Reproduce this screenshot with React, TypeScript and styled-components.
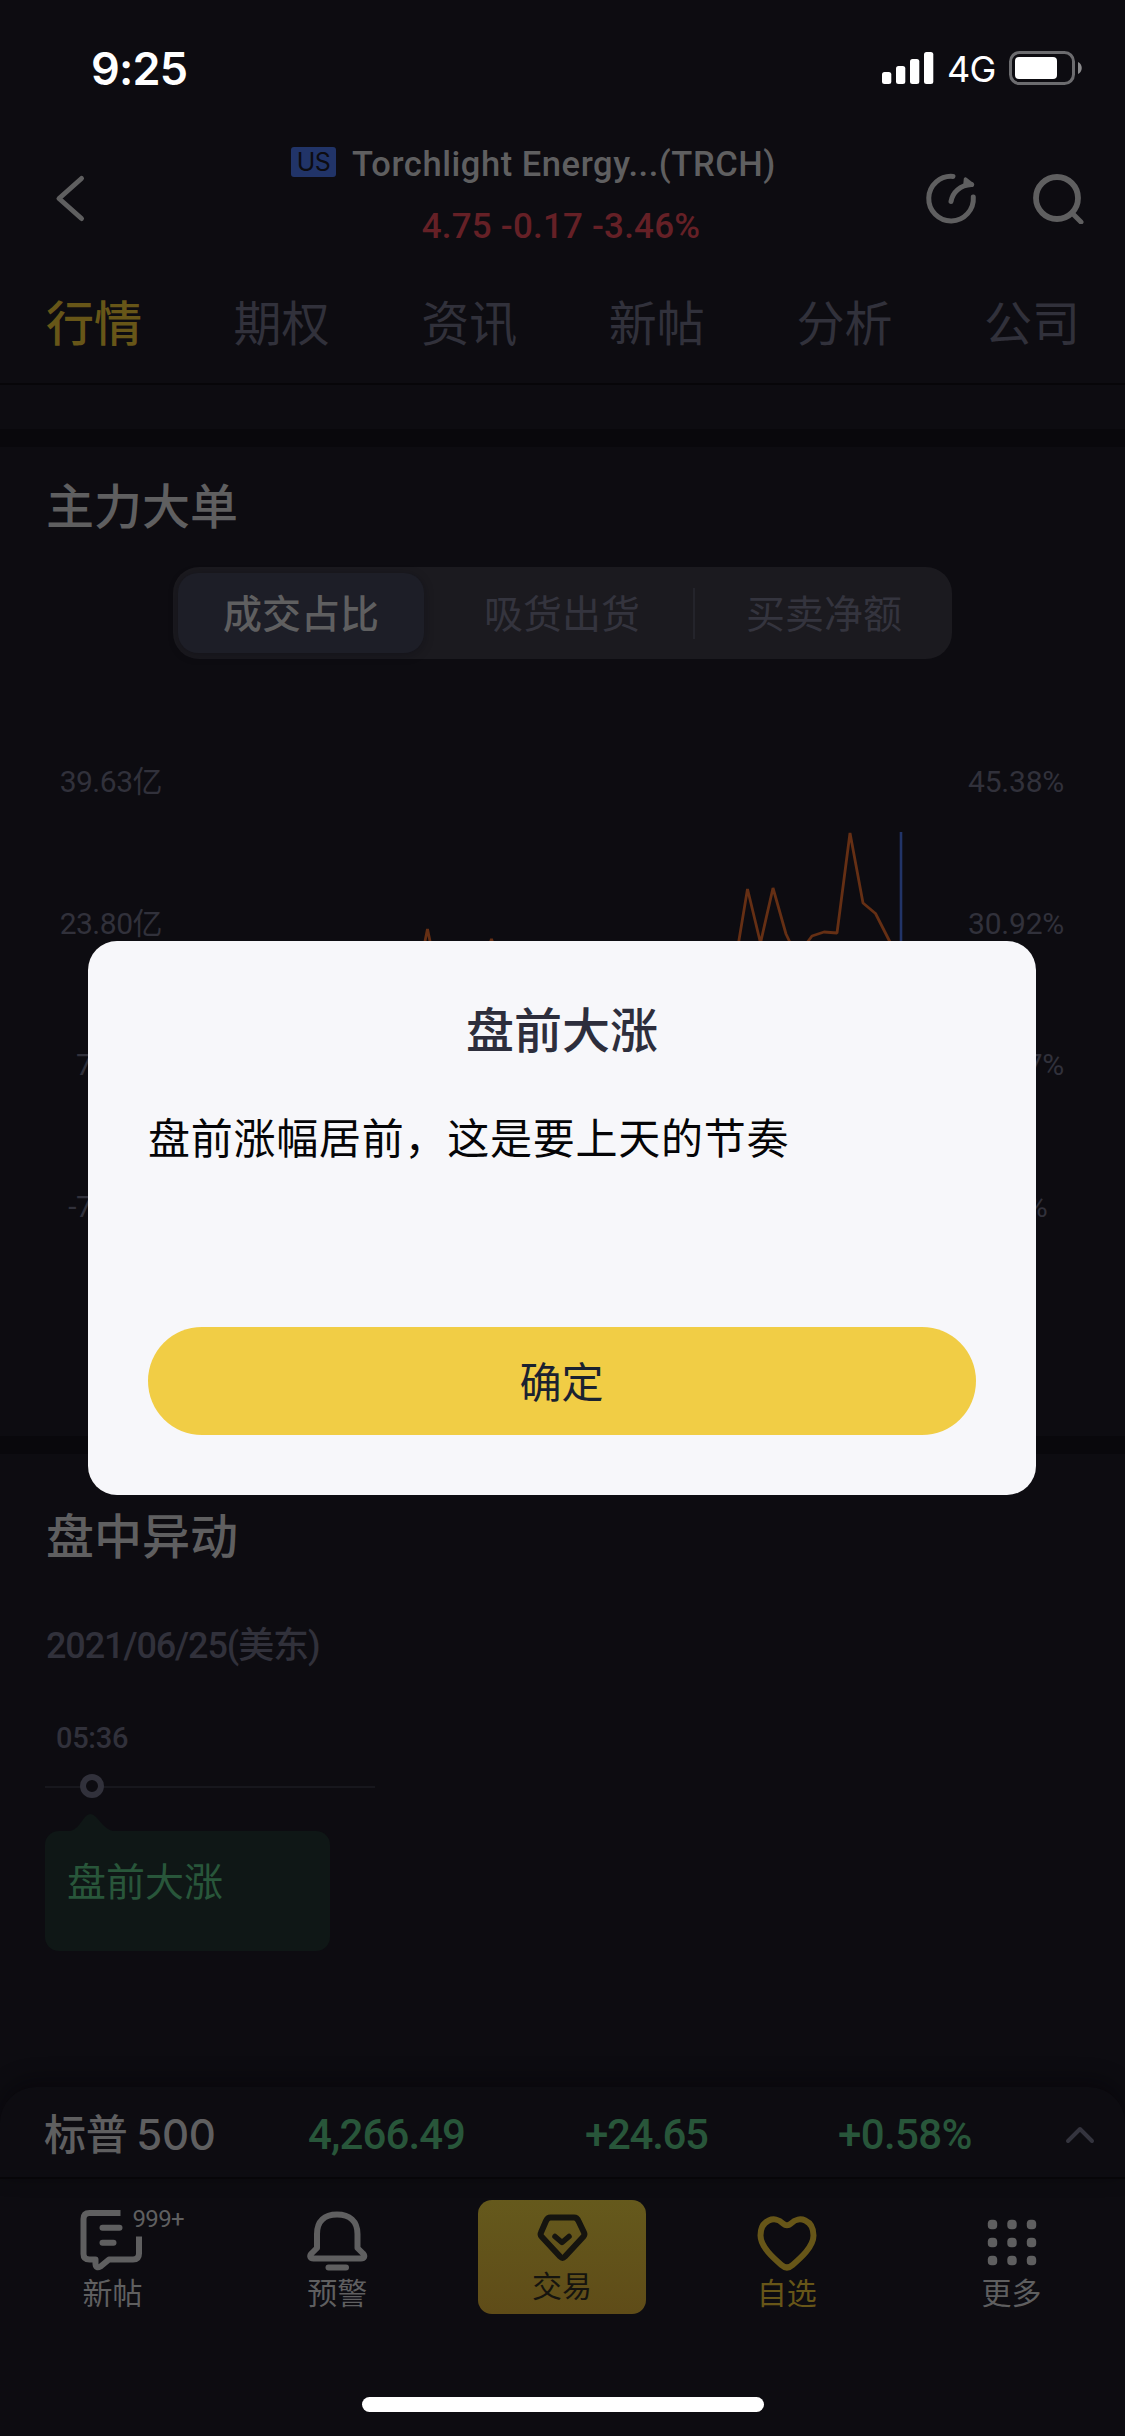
import React from "react";
import styled, { createGlobalStyle } from "styled-components";

const c = {
  page: "#0d0c11",
  band: "#09080c",
  line: "#070609",
  text: "#5f5f60",
  muted: "#31313b",
  faint: "#17171d",
  yellow: "#675618",
  green: "#28563a",
  greenBg: "#0f1716",
  red: "#652026",
  blue: "#213468",
};

const cjk = `"Noto Sans CJK SC", sans-serif`;
const num = `Roboto, "Noto Sans CJK SC", sans-serif`;

const GlobalStyle = createGlobalStyle`
  * { box-sizing: border-box; }
  html, body { margin: 0; padding: 0; background: ${c.page}; }
  body { font-family: ${cjk}; color: ${c.text}; }
`;

const Screen = styled.div`
  position: relative;
  width: 1125px;
  height: 2436px;
  display: flex;
  flex-direction: column;
  overflow: hidden;
  background: ${c.page};
  white-space: nowrap;
`;

const StatusBar = styled.header`
  height: 132px;
  padding: 0 41px 0 91px;
  display: flex;
  justify-content: space-between;
  align-items: flex-start;
  color: #fff;
`;

const Clock = styled.span`
  margin-top: 39px;
  font: 600 45px/60px Inter, sans-serif;
  letter-spacing: -0.8px;
`;

const StatusIcons = styled.div`
  margin-top: 48px;
  height: 40px;
  display: flex;
  align-items: center;
`;

const Network = styled.span`
  width: 75px;
  padding: 2px 0 0 13px;
  font: 400 36px/40px Inter, sans-serif;
  letter-spacing: -0.8px;
`;

const NavBar = styled.nav`
  height: 132px;
  padding: 0 40px 0 51px;
  display: grid;
  grid-template-columns: 170px 1fr 170px;
`;

const NavSide = styled.div<{ $end?: boolean }>`
  padding-top: 38px;
  display: flex;
  align-items: flex-start;
  justify-content: ${(p) => (p.$end ? "flex-end" : "flex-start")};
  gap: 53px;
`;

const NavTitle = styled.div`
  padding-top: 11px;
  display: flex;
  flex-direction: column;
  align-items: center;
`;

const StockName = styled.div`
  display: flex;
  align-items: center;
  gap: 16px;
  height: 42px;
  margin-right: 69px;
  font: 500 34.5px/42px ${num};
  letter-spacing: 0.55px;
`;

const Market = styled.span`
  width: 45px;
  height: 30px;
  border-radius: 3px;
  background: ${c.blue};
  color: ${c.page};
  text-align: center;
  font: 400 25px/30px Inter, sans-serif;
  letter-spacing: -0.5px;
  transform: translateY(-2px);
`;

const Price = styled.div`
  margin: 21px 14px 0 0;
  color: ${c.red};
  font: 500 35px/42px ${num};
  letter-spacing: 0.2px;
`;

const Tabs = styled.div`
  height: 121px;
  padding: 0 45px 8px 46px;
  display: flex;
  justify-content: space-between;
  align-items: center;
  border-bottom: 2px solid ${c.line};
`;

const Tab = styled.span<{ $active?: boolean }>`
  font-size: 48px;
  line-height: 60px;
  font-weight: ${(p) => (p.$active ? 500 : 400)};
  color: ${(p) => (p.$active ? c.yellow : c.muted)};
`;

const Band = styled.div<{ $top: number }>`
  margin-top: ${(p) => p.$top}px;
  height: 18px;
  flex: none;
  background: ${c.band};
`;

const Section = styled.section<{ $height?: number }>`
  height: ${(p) => (p.$height ? `${p.$height}px` : "auto")};
  flex: none;
  display: flex;
  flex-direction: column;
`;

const SectionTitle = styled.h2<{ $top: number }>`
  margin: ${(p) => p.$top}px 0 0 46px;
  font-size: 48px;
  line-height: 60px;
  font-weight: 500;
`;

const Segments = styled.div`
  width: 779px;
  height: 92px;
  margin: 34px 0 0 173px;
  padding: 0 5px;
  display: flex;
  align-items: center;
  border-radius: 26px;
  background: #1b1a1f;
`;

const Segment = styled.span<{ $active?: boolean; $width: number; $indent?: number }>`
  flex: none;
  width: ${(p) => p.$width}px;
  height: 80px;
  padding-left: ${(p) => p.$indent ?? 0}px;
  border-radius: 20px;
  text-align: center;
  font-size: 39px;
  line-height: 76px;
  font-weight: ${(p) => (p.$active ? 500 : 400)};
  color: ${(p) => (p.$active ? c.text : "#34343e")};
  background: ${(p) => (p.$active ? "#1d1e27" : "transparent")};
  box-shadow: ${(p) => (p.$active ? "0 2px 10px rgba(10, 10, 16, 0.35)" : "none")};
`;

const Divider = styled.i`
  flex: none;
  width: 2px;
  height: 51px;
  background: #24242b;
`;

const Chart = styled.div`
  display: flex;
  margin-top: 51px;
`;

const Axis = styled.div<{ $side: "left" | "right" }>`
  width: ${(p) => (p.$side === "left" ? 162 : 157)}px;
  padding-top: 1px;
  text-align: ${(p) => (p.$side === "left" ? "right" : "left")};
  color: ${c.muted};
  font: 400 30px/142px ${num};
  letter-spacing: ${(p) => (p.$side === "left" ? -0.5 : -0.2)}px;
`;

const AxisLabel = styled.div`
  height: 141.7px;
`;

const DateLine = styled.div`
  margin: 58px 0 0 46px;
  color: ${c.muted};
  font: 500 36px/50px ${num};
  letter-spacing: -1.1px;
`;

const Timeline = styled.div`
  width: 330px;
  margin: 46px 0 0 45px;
`;

const Time = styled.div`
  padding-left: 11px;
  color: ${c.muted};
  font: 500 29px/42px ${num};
  letter-spacing: -0.3px;
`;

const Track = styled.div`
  height: 24px;
  margin-top: 15px;
  padding-left: 35px;
  display: flex;
  align-items: center;
  background: linear-gradient(${c.faint}, ${c.faint}) 0 12px / 100% 2px no-repeat;
`;

const Dot = styled.i`
  width: 24px;
  height: 24px;
  border-radius: 50%;
  border: 6px solid ${c.muted};
  background: ${c.page};
`;

const EventTip = styled.svg`
  display: block;
  margin: 15px 0 0 25px;
`;

const EventCard = styled.div`
  width: 285px;
  height: 120px;
  padding: 18px 22px;
  border-radius: 14px;
  background: ${c.greenBg};
  color: ${c.green};
  font-size: 39px;
  line-height: 60px;
`;

const IndexBar = styled.div`
  height: 92px;
  margin-top: auto;
  padding: 5px 30px 0 44px;
  display: flex;
  align-items: center;
  border-radius: 36px 36px 0 0;
  border-bottom: 2px solid ${c.line};
  box-shadow: 0 -6px 22px rgba(4, 3, 6, 0.45);
  background: #0d0c11;
`;

const IndexName = styled.span`
  width: 264px;
  font: 500 42px/60px Inter, ${cjk};
  letter-spacing: -0.3px;
  word-spacing: -2px;
`;

const IndexValue = styled.span<{ $width: number; $spacing: number }>`
  width: ${(p) => p.$width}px;
  padding-top: 1px;
  color: ${c.green};
  font: 500 42px/60px ${num};
  letter-spacing: ${(p) => p.$spacing}px;
`;

const BottomBar = styled.footer`
  height: 257px;
  flex: none;
  display: flex;
  flex-direction: column;
  align-items: center;
`;

const BottomItems = styled.div`
  width: 100%;
  height: 218px;
  padding-right: 1px;
  display: grid;
  grid-template-columns: repeat(5, 1fr);
  justify-items: center;
  align-items: start;
`;

const BottomItem = styled.div<{ $active?: boolean }>`
  position: relative;
  padding-top: 26px;
  display: flex;
  flex-direction: column;
  align-items: center;
  color: ${(p) => (p.$active ? c.yellow : c.text)};
  font-size: 30px;
  line-height: 40px;
`;

const TradeButton = styled.div`
  width: 168px;
  height: 114px;
  margin-top: 21px;
  padding-top: 10px;
  display: flex;
  flex-direction: column;
  align-items: center;
  border-radius: 14px;
  background: linear-gradient(#65591c, #5f4c18);
  color: #15140f;
  font-size: 30px;
  line-height: 36px;
`;

const Count = styled.span`
  position: absolute;
  left: 54px;
  top: 25px;
  font: 400 24px/30px ${num};
  letter-spacing: -0.6px;
`;

const HomeIndicator = styled.div`
  width: 402px;
  height: 15px;
  border-radius: 8px;
  background: #fff;
`;

const Overlay = styled.div`
  position: absolute;
  inset: 0;
  padding-right: 1px;
  display: flex;
  justify-content: center;
  align-items: center;
`;

const Dialog = styled.div`
  width: 948px;
  height: 554px;
  padding: 56px 60px 60px;
  display: flex;
  flex-direction: column;
  border-radius: 29px;
  background: #f7f7fa;
`;

const DialogTitle = styled.h1`
  margin: 0;
  text-align: center;
  font-size: 48px;
  line-height: 60px;
  font-weight: 500;
  color: #2d2e3c;
`;

const DialogText = styled.p`
  margin: 49px 0 0;
  font-size: 42px;
  line-height: 60px;
  letter-spacing: 0.75px;
  color: #050507;
`;

const Confirm = styled.button`
  height: 108px;
  margin-top: auto;
  padding: 0 1px 3px 0;
  border: 0;
  border-radius: 54px;
  background: #f1cd45;
  color: #1b2230;
  font: 400 42px/60px ${cjk};
`;

const stroke = {
  fill: "none",
  stroke: "currentColor",
  strokeLinecap: "round" as const,
  strokeLinejoin: "round" as const,
};

const Signal = () => (
  <svg width="52" height="34" viewBox="0 0 52 34" fill="#fff">
    <rect x="0" y="21" width="9.3" height="12" rx="2.5" />
    <rect x="14" y="15" width="9.3" height="18" rx="2.5" />
    <rect x="28" y="8" width="9.3" height="25" rx="2.5" />
    <rect x="42" y="1" width="9.3" height="32" rx="2.5" />
  </svg>
);

const Battery = () => (
  <svg width="75" height="36" viewBox="0 0 75 36">
    <rect x="1.5" y="2.5" width="63" height="31" rx="9" fill="none" stroke="#6c6c6f" strokeWidth="3" />
    <rect x="6" y="7" width="42" height="22" rx="4" fill="#fff" />
    <path d="M69 12c5 2 5 10 0 12z" fill="#8a8a8c" />
  </svg>
);

const BackIcon = () => (
  <svg width="38" height="56" viewBox="0 0 38 56" {...stroke} strokeWidth="5">
    <path d="M30.500 8.500 8 28.500 30.500 48.500" />
  </svg>
);

const ShareIcon = () => (
  <svg width="54" height="54" viewBox="0 0 54 54" {...stroke} strokeWidth="5">
    <path d="M29 6.400A22.300 22.300 0 1 0 49.300 27" />
    <path d="M27 31.500C28.500 22.500 36 15 47.500 14.500" />
    <path d="M41.500 9 48.500 14.700H41z" fill="currentColor" strokeWidth="3.500" />
  </svg>
);

const SearchIcon = () => (
  <svg width="54" height="54" viewBox="0 0 54 54" {...stroke} strokeWidth="5.800">
    <circle cx="26" cy="28" r="21" />
    <path d="M42 44 50 52" strokeWidth="5" />
  </svg>
);

const BigOrderChart = () => (
  <svg width="806" height="567" viewBox="162 710 806 567" fill="none">
    <path
      d="M180 1080 230 1020 280 1060 330 990 380 1030 415 990 427.500 929 439 985 465 970 479 975 491.500 939 503 975 560 1010 620 980 680 1000 725 990 738 946 747.500 889 760.500 943 773 888 786 934 797 957 806 944 812 936 824 932 837 933 850 833 863 903 875.500 913.500 890 942 901 965"
      stroke="#652f14"
      strokeWidth="2.800"
      strokeLinejoin="bevel"
    />
    <path d="M901 832V1180" stroke={c.blue} strokeWidth="2.600" />
  </svg>
);

const PostIcon = () => (
  <svg width="68" height="66" viewBox="0 0 68 66" {...stroke} strokeWidth="6">
    <path d="M42.500 8H11.500Q5.500 8 5.500 14V49Q5.500 54.500 11.500 54.500H17.500V59Q18 64 22.500 61.500L31 54.500H55Q61 54.500 61 48.500V31.500" strokeLinecap="butt" />
    <path d="M24.500 22.800H41.500M24.500 37.800H35.500" />
  </svg>
);

const BellIcon = () => (
  <svg width="68" height="66" viewBox="0 0 68 66" {...stroke} strokeWidth="6">
    <path d="M14 43V29C14 16 21.500 9.500 34 9.500S54.500 16 54.500 29V43L60 48.500C62.500 51.500 61 53.500 58 53.500H10.500C7.500 53.500 6 51.500 8.500 48.500Z" />
    <path d="M25.500 62.500H43" />
  </svg>
);

const TradeIcon = () => (
  <svg width="56" height="56" viewBox="0 0 56 56" {...stroke} strokeWidth="6">
    <path d="M16.500 7.500H40Q43 7.500 44.500 11L50 22.500Q51 24.500 49.500 26.500L31 46.500Q28.500 49 26 46.500L7.500 26.500Q6 24.500 7 22.500L12 11Q13.500 7.500 16.500 7.500Z" />
    <path d="M21 26.500 28 32.500 35 26.500" strokeWidth="5.500" />
  </svg>
);

const HeartIcon = () => (
  <svg width="68" height="66" viewBox="0 0 68 66" {...stroke} strokeWidth="6">
    <path d="M30 18.500C22 10 7.500 15 7.500 30.500C7.500 42 21 53.500 28.500 60Q34 65 39.500 60C47 53.500 60.500 42 60.500 30.500C60.500 15 46 10 38 18.500Q34 22 30 18.500Z" />
  </svg>
);

const MoreIcon = () => (
  <svg width="68" height="66" viewBox="0 0 68 66" fill="currentColor">
    {[19.5, 37.5, 55.5].map((y) =>
      [14.5, 34, 53.5].map((x) => <rect key={`${x}-${y}`} x={x - 4.7} y={y - 4.7} width="9.4" height="9.4" rx="3.8" />)
    )}
  </svg>
);

const tabs = ["行情", "期权", "资讯", "新帖", "分析", "公司"];
const volumes = ["39.63亿", "23.80亿", "7.97亿", "-7.86亿"];
const ratios = ["45.38%", "30.92%", "16.47%", "2.01%"];

export default function App() {
  return (
    <Screen>
      <GlobalStyle />
      <StatusBar>
        <Clock>9:25</Clock>
        <StatusIcons>
          <Signal />
          <Network>4G</Network>
          <Battery />
        </StatusIcons>
      </StatusBar>

      <NavBar>
        <NavSide><BackIcon /></NavSide>
        <NavTitle>
          <StockName><Market>US</Market>Torchlight Energy...(TRCH)</StockName>
          <Price>4.75 -0.17 -3.46%</Price>
        </NavTitle>
        <NavSide $end><ShareIcon /><SearchIcon /></NavSide>
      </NavBar>

      <Tabs>
        {tabs.map((t, i) => <Tab key={t} $active={i === 0}>{t}</Tab>)}
      </Tabs>

      <Band $top={44} />
      <Section $height={989}>
        <SectionTitle $top={26}>主力大单</SectionTitle>
        <Segments>
          <Segment $active $width={246}>成交占比</Segment>
          <Segment $width={269} $indent={7}>吸货出货</Segment>
          <Divider />
          <Segment $width={252} $indent={6}>买卖净额</Segment>
        </Segments>
        <Chart>
          <Axis $side="left">{volumes.map((v) => <AxisLabel key={v}>{v}</AxisLabel>)}</Axis>
          <BigOrderChart />
          <Axis $side="right">{ratios.map((v) => <AxisLabel key={v}>{v}</AxisLabel>)}</Axis>
        </Chart>
      </Section>

      <Band $top={0} />
      <Section>
        <SectionTitle $top={49}>盘中异动</SectionTitle>
        <DateLine>2021/06/25(美东)</DateLine>
        <Timeline>
          <Time>05:36</Time>
          <Track><Dot /></Track>
          <EventTip width="44" height="18" viewBox="0 0 44 18">
            <path d="M0 18Q5 17 9 12L15 4Q20-2 26 4L33 12Q38 17 43 18Z" fill={c.greenBg} />
          </EventTip>
          <EventCard>盘前大涨</EventCard>
        </Timeline>
      </Section>

      <IndexBar>
        <IndexName>标普 500</IndexName>
        <IndexValue $width={277} $spacing={-0.9}>4,266.49</IndexValue>
        <IndexValue $width={253} $spacing={-1.3}>+24.65</IndexValue>
        <IndexValue $width={227} $spacing={-0.6}>+0.58%</IndexValue>
        <svg width="30" height="20" viewBox="0 0 30 20" {...stroke} stroke="#34343e" strokeWidth="4">
          <path d="M3 16 15 4 27 16" />
        </svg>
      </IndexBar>

      <BottomBar>
        <BottomItems>
          <BottomItem><PostIcon /><Count>999+</Count>新帖</BottomItem>
          <BottomItem><BellIcon />预警</BottomItem>
          <TradeButton><TradeIcon />交易</TradeButton>
          <BottomItem $active><HeartIcon />自选</BottomItem>
          <BottomItem><MoreIcon />更多</BottomItem>
        </BottomItems>
        <HomeIndicator />
      </BottomBar>

      <Overlay>
        <Dialog role="dialog">
          <DialogTitle>盘前大涨</DialogTitle>
          <DialogText>盘前涨幅居前，这是要上天的节奏</DialogText>
          <Confirm>确定</Confirm>
        </Dialog>
      </Overlay>
    </Screen>
  );
}
